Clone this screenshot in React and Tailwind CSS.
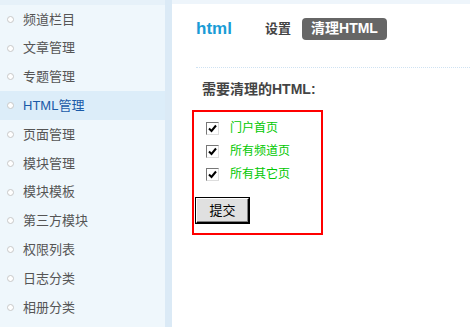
import React from 'react';

const menu = [
  '频道栏目',
  '文章管理',
  '专题管理',
  'HTML管理',
  '页面管理',
  '模块管理',
  '模块模板',
  '第三方模块',
  '权限列表',
  '日志分类',
  '相册分类',
];

const pages = ['门户首页', '所有频道页', '所有其它页'];

export default function App() {
  return (
    <div
      className="flex w-[470px] h-[327px] overflow-hidden bg-white"
      style={{ fontFamily: '"Liberation Sans", "Noto Sans CJK SC", sans-serif' }}
    >
      {/* 左侧菜单 */}
      <div className="w-[165px] shrink-0 bg-[#eff7fc] flex flex-col">
        <div className="h-[5px] bg-[#e6f1f9]" />
        {menu.map((item) => (
          <div
            key={item}
            className={`h-[28.8px] shrink-0 flex items-center pl-[7px] text-[13px] ${
              item === 'HTML管理' ? 'bg-[#dcedf9] text-[#1a5aa8]' : 'text-[#555]'
            }`}
          >
            <span className="w-[7px] h-[7px] rounded-full border border-[#c8c8c8] bg-white mr-[9px]" />
            {item}
          </div>
        ))}
      </div>
      <div className="w-[7px] shrink-0 bg-[#dbeaf6]" />

      {/* 内容区 */}
      <div className="flex-1 flex flex-col">
        <div className="h-[4px] bg-[#eef5fb]" />
        <div className="flex items-center h-[48px] pl-[24px] pt-[1px]">
          <span className="text-[17px] font-bold text-[#1a9cd6] w-[69px]">html</span>
          <span className="text-[13px] font-bold text-[#444] mr-[11px]">设置</span>
          <span className="bg-[#666] text-white text-[14px] font-bold px-[9px] h-[22px] flex items-center rounded-[4px]">
            清理HTML
          </span>
        </div>
        <div className="ml-[24px] mt-[15px] border-t border-dotted border-[#cfe2f2]" />
        <div className="pl-[30px] pt-[11px] text-[14px] font-bold text-[#444]">需要清理的HTML:</div>

        <div className="ml-[20px] mt-[10px] w-[131px] h-[125px] border-2 border-[#ff0000] flex flex-col">
          <div className="flex flex-col gap-[7px] pl-[12px] pt-[8px]">
            {pages.map((p) => (
              <label key={p} className="flex items-center h-[16px] text-[12px] text-[#00c800]">
                <span className="w-[13px] h-[13px] border border-[#777] border-r-[#ddd] border-b-[#ddd] bg-white flex items-center justify-center mr-[11px]">
                  <svg width="9" height="9" viewBox="0 0 9 9">
                    <path d="M1 4.5 L3.5 7 L8 1.5" stroke="#000" strokeWidth="2" fill="none" />
                  </svg>
                </span>
                {p}
              </label>
            ))}
          </div>
          <button className="ml-[2px] mt-[16px] w-[53px] h-[25px] bg-[#e0e0e0] border border-[#000] border-t-[#fff] border-l-[#fff] shadow-[inset_-1px_-1px_0_#808080,0_0_0_1px_#000] text-[13px] text-black flex items-center justify-center">
            提交
          </button>
        </div>
      </div>
    </div>
  );
}
